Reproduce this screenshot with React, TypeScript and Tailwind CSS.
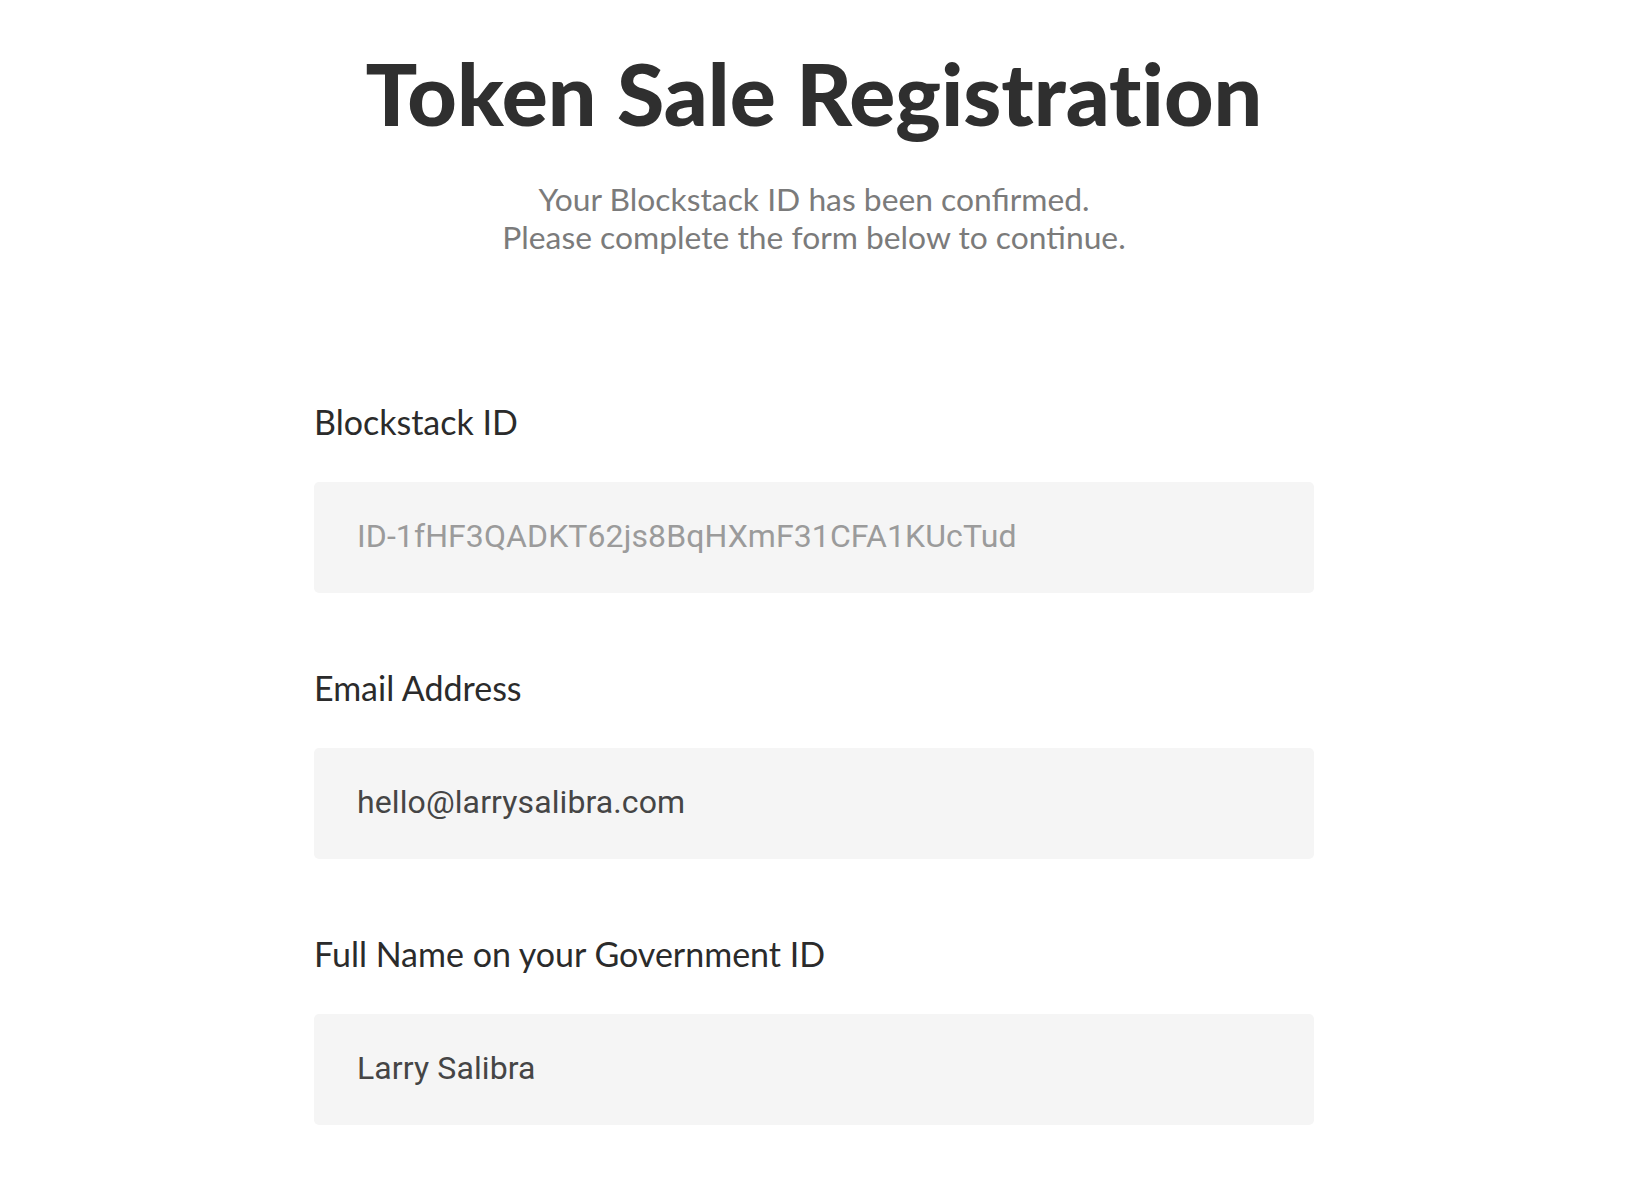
import React from 'react';

interface FieldProps {
  label: string;
  value: string;
  muted?: boolean;
}

const Field: React.FC<FieldProps> = ({ label, value, muted }) => (
  <div className="flex flex-col">
    <label className="text-[34px] leading-[40px] text-[#2b2b2b] font-['Lato',sans-serif]">
      {label}
    </label>
    <input
      readOnly
      value={value}
      className={`mt-[40px] h-[111px] w-full rounded-[5px] bg-[#f5f5f5] px-[43px] pb-[4px] text-[32px] tracking-[0.1px] font-['Roboto',sans-serif] outline-none ${
        muted ? 'text-[#9b9b9b]' : 'text-[#454545]'
      }`}
    />
  </div>
);

const App: React.FC = () => {
  const fields: FieldProps[] = [
    { label: 'Blockstack ID', value: 'ID-1fHF3QADKT62js8BqHXmF31CFA1KUcTud', muted: true },
    { label: 'Email Address', value: 'hello@larrysalibra.com' },
    { label: 'Full Name on your Government ID', value: 'Larry Salibra' }
  ];

  return (
    <div className="min-h-screen bg-white font-['Lato',sans-serif]">
      <div className="ml-[314px] w-[1000px] pt-[50px] pb-[60px]">
        {/* Header */}
        <div className="text-center">
          <h1 className="text-[86px] leading-none font-black text-[#2f2f2f] [font-variant-ligatures:none]">
            Token Sale Registration
          </h1>
          <p className="mt-[44px] text-[31.8px] leading-[38px] text-[#7b7b7b]">
            Your Blockstack ID has been confirmed.
            <br />
            Please complete the form below to continue.
          </p>
        </div>

        {/* Form */}
        <div className="mt-[146px] flex flex-col gap-[75px]">
          {fields.map((field) => (
            <Field key={field.label} {...field} />
          ))}
        </div>
      </div>
    </div>
  );
};

export default App;
